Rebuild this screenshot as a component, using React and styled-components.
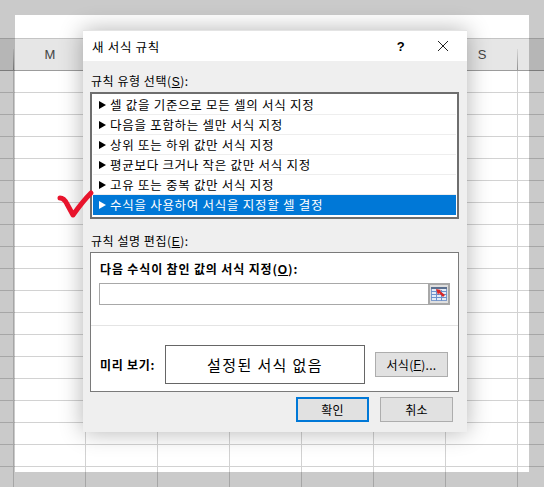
import React from 'react'
import styled, { createGlobalStyle } from 'styled-components'

const GlobalStyle = createGlobalStyle`
  html, body { margin: 0; padding: 0; }
  body { font-family: "Noto Sans CJK KR", "Liberation Sans", sans-serif; }
`

const Page = styled.div`
  position: relative;
  width: 544px;
  height: 487px;
  overflow: hidden;
  background: #fff;
  padding-top: 38px;
  box-sizing: border-box;
`

const HeaderRow = styled.div`
  height: 33px;
  display: flex;
  align-items: center;
  padding-left: 14px;
  box-sizing: border-box;
  background-color: #e6e6e6;
  background-image: linear-gradient(#d8d8d8, #909090), linear-gradient(#d8d8d8, #909090);
  background-size: 1px 21px;
  background-position: 13px bottom, 517px bottom;
  background-repeat: no-repeat;
  border-top: 1px solid #c4c4c4;
  border-bottom: 1px solid #9c9c9c;
  color: #444;
  font: 13px "Liberation Sans", sans-serif;
`

const ColName = styled.span`
  width: ${p => p.$w}px;
  text-align: center;
`

const Cells = styled.div`
  height: 416px;
  background-image:
    linear-gradient(to bottom, transparent 21px, #d2d2d2 21px),
    linear-gradient(to right, transparent 13px, #d2d2d2 13px, #d2d2d2 14px, transparent 14px);
  background-size: 100% 22px, 72px 100%;
`

/* dimmed frame lying over the sheet */
const Frame = styled.div`
  position: absolute;
  inset: 0;
  border: 15px solid rgba(0, 0, 0, 0.208);
  pointer-events: none;
`

const Dialog = styled.div`
  position: absolute;
  left: 83px;
  top: 30px;
  width: 384px;
  height: 402px;
  background: #efefef;
  box-shadow: 0 0 22px rgba(0, 0, 0, 0.3);
  border-top: 1px solid #e4e4e4;
  box-sizing: border-box;
  color: #000;
  font-size: 12.5px;
  display: flex;
  flex-direction: column;
`

const TitleBar = styled.div`
  height: 30px;
  flex: none;
  background: #fff;
  display: flex;
  align-items: center;
  padding-left: 9px;
  letter-spacing: 0.7px;
`

const TitleText = styled.span`
  flex: 1;
`

const HelpMark = styled.span`
  width: 14px;
  margin-right: 29px;
  text-align: center;
  font: bold 13px "Liberation Sans", sans-serif;
`

const CloseIcon = styled.svg`
  width: 12px;
  height: 12px;
  margin-right: 18px;
`

const Body = styled.div`
  flex: 1;
  padding: 11px 8px 10px 7px;
  display: flex;
  flex-direction: column;
`

const GroupLabel = styled.div`
  height: 18px;
  line-height: 17px;
  padding-left: 1px;
  font-size: 12px;
  letter-spacing: 0.55px;
`

const Key = styled.u`
  font-family: "Liberation Sans", sans-serif;
`

const RuleList = styled.ul`
  list-style: none;
  margin: 2px 0 0;
  padding: 1px;
  height: 127px;
  box-sizing: border-box;
  border: 2px solid #6e6e6e;
  background: #fff;
  width: 369px;
`

const RuleRow = styled.li`
  height: 20px;
  box-sizing: border-box;
  display: flex;
  align-items: center;
  padding-left: 6px;
  letter-spacing: 0.72px;
  background: ${p => (p.$selected ? '#0078d7' : '#fff')};
  color: ${p => (p.$selected ? '#fff' : '#000')};
  border-bottom: 1px solid ${p => (p.$selected ? '#0078d7' : '#eeeeee')};
`

const Arrow = styled.span`
  width: 0;
  height: 0;
  margin-right: 4px;
  border-left: 7px solid ${p => (p.$selected ? '#fff' : '#000')};
  border-top: 4px solid transparent;
  border-bottom: 4px solid transparent;
`

const EditLabel = styled(GroupLabel)`
  margin-top: 13px;
`

const EditBox = styled.div`
  margin-top: 2px;
  width: 369px;
  height: 140px;
  box-sizing: border-box;
  border: 1px solid #7a7a7a;
  background: #fff;
  display: flex;
  flex-direction: column;
`

const FormulaLabel = styled.div`
  margin: 7px 0 0 9px;
  height: 17px;
  line-height: 17px;
  font-size: 12px;
  font-weight: 700;
  letter-spacing: 0.85px;
`

const FormulaRow = styled.div`
  margin: 6px 0 0 8px;
  display: flex;
  height: 22px;
`

const FormulaInput = styled.div`
  width: 329px;
  box-sizing: border-box;
  border: 1px solid #a8a8a8;
  border-right: none;
  background: #fff;
`

const RangeButton = styled.div`
  width: 22px;
  box-sizing: border-box;
  border: 2px solid #a8a8a8;
  background: #dfdfdf;
  display: flex;
  align-items: center;
  justify-content: center;
`

const Divider = styled.div`
  margin-top: 20px;
  height: 1px;
  background: #e4e4e4;
`

const PreviewRow = styled.div`
  margin-top: 19px;
  display: flex;
  align-items: center;
  padding-left: 9px;
`

const PreviewLabel = styled.span`
  width: 65px;
  font-size: 12px;
  font-weight: 700;
  letter-spacing: 0.7px;
`

const PreviewBox = styled.div`
  width: 200px;
  height: 39px;
  box-sizing: border-box;
  border: 1px solid #666;
  display: flex;
  align-items: center;
  justify-content: center;
  font-size: 15px;
  letter-spacing: 1.4px;
`

const Button = styled.div`
  box-sizing: border-box;
  display: flex;
  align-items: center;
  justify-content: center;
  background: #e1e1e1;
  border: ${p => (p.$primary ? '2px solid #0078d7' : '1px solid #adadad')};
  font-size: 12px;
  letter-spacing: 0.3px;
`

const FormatButton = styled(Button)`
  margin-left: 10px;
  width: 73px;
  height: 25px;
`

const Footer = styled.div`
  margin-top: 5px;
  display: flex;
  justify-content: flex-end;
  gap: 11px;
  padding-right: 6px;
`

const FooterButton = styled(Button)`
  width: 73px;
  height: 25px;
`

const CheckMark = styled.svg`
  position: absolute;
  left: 54px;
  top: 188px;
  width: 44px;
  height: 34px;
`

const rules = [
  '셀 값을 기준으로 모든 셀의 서식 지정',
  '다음을 포함하는 셀만 서식 지정',
  '상위 또는 하위 값만 서식 지정',
  '평균보다 크거나 작은 값만 서식 지정',
  '고유 또는 중복 값만 서식 지정',
  '수식을 사용하여 서식을 지정할 셀 결정',
]

function RangeIcon() {
  return (
    <svg width="16" height="14" viewBox="0 0 16 14">
      <rect x="0.5" y="0.5" width="15" height="13" fill="#e4ecf7" stroke="#7f9ccb" />
      <path d="M0 4.5h16M0 7.5h16M0 10.5h16M5.5 3v11M10.5 3v11" stroke="#6d92cc" strokeWidth="1" />
      <rect x="0" y="0" width="16" height="2" fill="#5b6f8f" />
      <path d="M5 2l5 1-1 1 5 4-2 2-4-4-1 2z" fill="#dc2626" />
    </svg>
  )
}

export default function App() {
  return (
    <Page>
      <GlobalStyle />
      <HeaderRow>
        <ColName $w={72}>M</ColName>
        <ColName $w={360} />
        <ColName $w={72}>S</ColName>
      </HeaderRow>
      <Cells />
      <Frame />

      <Dialog>
        <TitleBar>
          <TitleText>새 서식 규칙</TitleText>
          <HelpMark>?</HelpMark>
          <CloseIcon viewBox="0 0 12 12">
            <path d="M1 1l10 10M11 1L1 11" stroke="#222" strokeWidth="1" fill="none" />
          </CloseIcon>
        </TitleBar>
        <Body>
          <GroupLabel>
            규칙 유형 선택(<Key>S</Key>):
          </GroupLabel>
          <RuleList>
            {rules.map((rule, i) => (
              <RuleRow key={rule} $selected={i === 5}>
                <Arrow $selected={i === 5} />
                {rule}
              </RuleRow>
            ))}
          </RuleList>
          <EditLabel>
            규칙 설명 편집(<Key>E</Key>):
          </EditLabel>
          <EditBox>
            <FormulaLabel>
              다음 수식이 참인 값의 서식 지정(<Key>O</Key>):
            </FormulaLabel>
            <FormulaRow>
              <FormulaInput />
              <RangeButton>
                <RangeIcon />
              </RangeButton>
            </FormulaRow>
            <Divider />
            <PreviewRow>
              <PreviewLabel>미리 보기:</PreviewLabel>
              <PreviewBox>설정된 서식 없음</PreviewBox>
              <FormatButton>
                서식(<Key>F</Key>)...
              </FormatButton>
            </PreviewRow>
          </EditBox>
          <Footer>
            <FooterButton $primary>확인</FooterButton>
            <FooterButton>취소</FooterButton>
          </Footer>
        </Body>
      </Dialog>

      <CheckMark viewBox="0 0 44 34">
        <path
          d="M6 10c3 0 5 2 7 6l6 11C24 20 31 11 37 5"
          stroke="#e8142c"
          strokeWidth="5"
          strokeLinecap="round"
          strokeLinejoin="round"
          fill="none"
        />
      </CheckMark>
    </Page>
  )
}
